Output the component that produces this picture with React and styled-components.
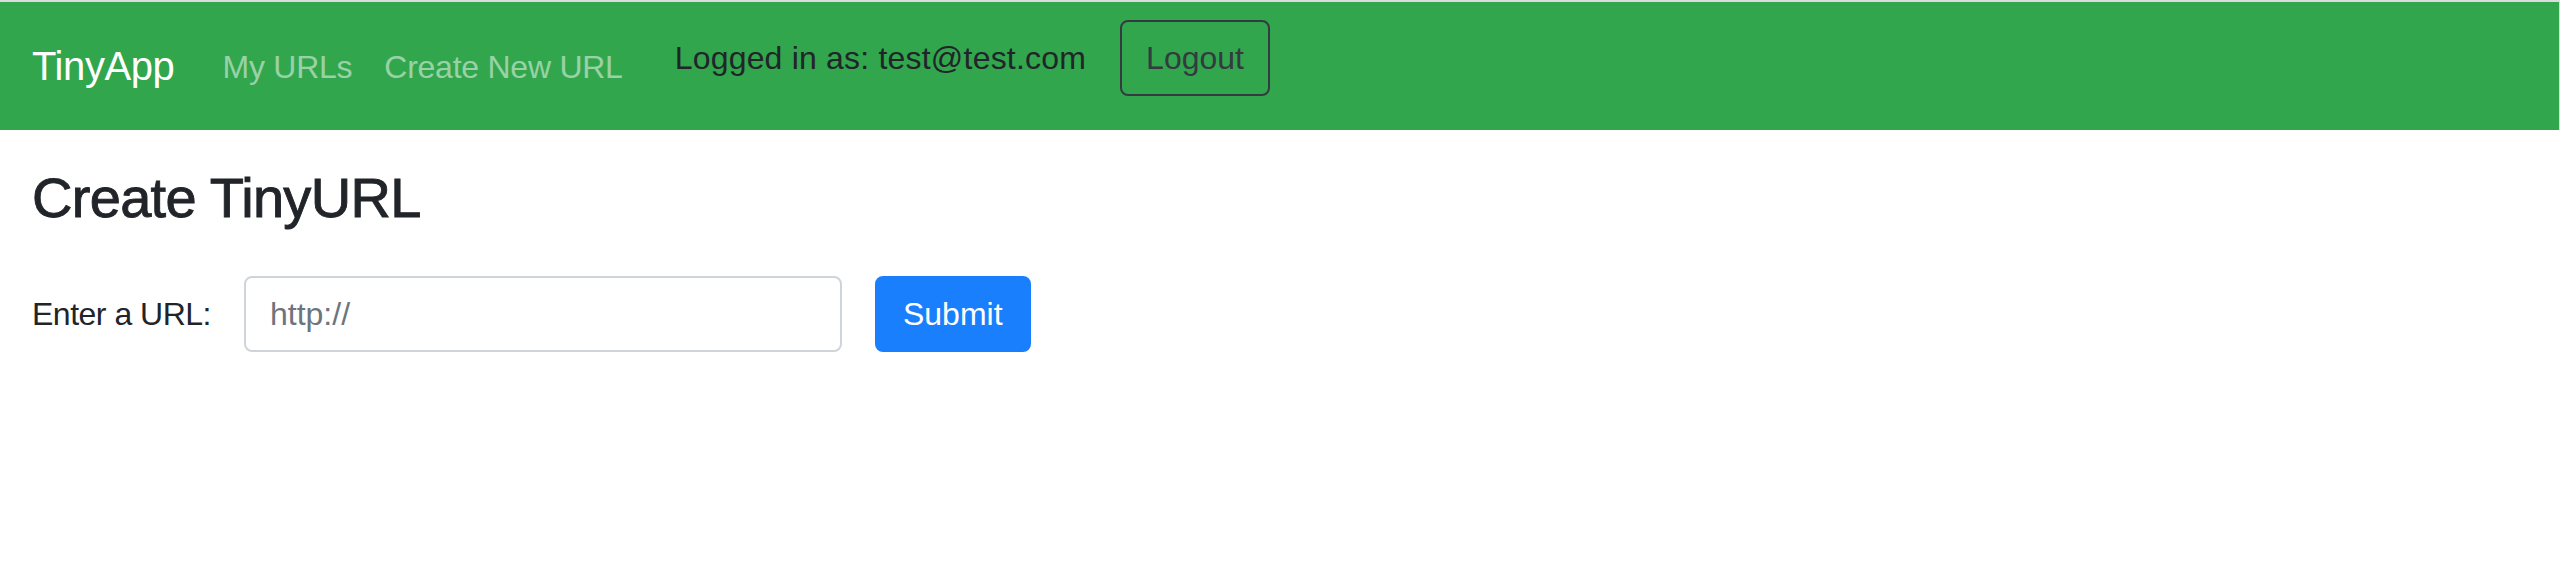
import React from "react";
import styled, { createGlobalStyle } from "styled-components";

const Global = createGlobalStyle`
  html, body { margin: 0; padding: 0; background: #ffffff; }
  body {
    font-family: "Liberation Sans", Arial, sans-serif;
    color: #212529;
    font-size: 32px;
    line-height: 1.5;
  }
  * { box-sizing: border-box; }
`;

const Navbar = styled.nav`
  display: flex;
  align-items: center;
  height: 130px;
  border-top: 2px solid #dcdcdc;
  border-right: 1px solid #dcdcdc;
  background: #31a64d;
  padding: 0 32px;
`;

const Brand = styled.a`
  font-size: 40px;
  line-height: 60px;
  color: #ffffff;
  margin-right: 32px;
  letter-spacing: -0.4px;
  text-decoration: none;
`;

const NavLink = styled.a`
  font-size: 32px;
  line-height: 48px;
  padding: 0 16px;
  margin-top: 2px;
  letter-spacing: -0.25px;
  color: rgba(255, 255, 255, 0.5);
  text-decoration: none;
`;

const UserArea = styled.div`
  display: flex;
  align-items: center;
  align-self: flex-start;
  margin-top: 18px;
  margin-left: 36px;
  gap: 34px;
`;

const UserText = styled.span`
  font-size: 32px;
  line-height: 48px;
  letter-spacing: 0.2px;
  color: #212529;
`;

const OutlineButton = styled.button`
  font-family: inherit;
  font-size: 32px;
  line-height: 48px;
  padding: 12px 24px;
  border: 2px solid #343a40;
  border-radius: 8px;
  background: transparent;
  color: #343a40;
  cursor: pointer;
`;

const Main = styled.main`
  padding: 0 32px;
`;

const Title = styled.h3`
  margin: 34px 0 0;
  font-size: 56px;
  line-height: 1.2;
  font-weight: 400;
  letter-spacing: -0.7px;
  color: #212529;
  -webkit-text-stroke: 0.9px #212529;
`;

const FormRow = styled.form`
  display: flex;
  align-items: center;
  margin-top: 45px;
`;

const Label = styled.label`
  font-size: 32px;
  line-height: 48px;
  letter-spacing: -0.5px;
  margin-right: 33px;
`;

const TextInput = styled.input`
  width: 598px;
  height: 76px;
  padding: 0 24px;
  font-family: inherit;
  font-size: 32px;
  color: #495057;
  border: 2px solid #ced4da;
  border-radius: 8px;
  outline: none;
  &::placeholder { color: #6c757d; }
`;

const PrimaryButton = styled.button`
  margin-left: 33px;
  height: 76px;
  padding: 0 26px;
  font-family: inherit;
  font-size: 32px;
  color: #ffffff;
  background: #1a7ffd;
  border: 2px solid #1a7ffd;
  border-radius: 8px;
  cursor: pointer;
`;

export default function App() {
  return (
    <>
      <Global />
      <Navbar>
        <Brand href="#">TinyApp</Brand>
        <NavLink href="#">My URLs</NavLink>
        <NavLink href="#">Create New URL</NavLink>
        <UserArea>
          <UserText>Logged in as: test@test.com</UserText>
          <OutlineButton type="button">Logout</OutlineButton>
        </UserArea>
      </Navbar>
      <Main>
        <Title>Create TinyURL</Title>
        <FormRow onSubmit={(e) => e.preventDefault()}>
          <Label htmlFor="longURL">Enter a URL:</Label>
          <TextInput id="longURL" type="text" placeholder="http://" />
          <PrimaryButton type="submit">Submit</PrimaryButton>
        </FormRow>
      </Main>
    </>
  );
}
